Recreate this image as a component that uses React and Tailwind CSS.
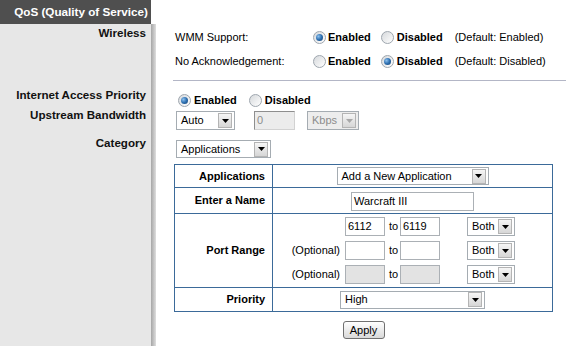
import React from "react";

// small helpers that imitate the old router UI widgets

function Radio({ checked }) {
	return (
		<span className="flex h-[13px] w-[13px] shrink-0 items-center justify-center rounded-full border border-[#9ea6ae] bg-linear-to-br from-[#d6d9dc] to-white">
			{checked && (
				<span className="h-[7px] w-[7px] rounded-full bg-radial-[at_35%_35%] from-[#8cc0ee] via-[#2d6fb0] to-[#173f6e]" />
			)}
		</span>
	);
}

function Arrow({ disabled }) {
	return (
		<span className="flex h-[15px] w-[14px] shrink-0 items-center justify-center border border-[#b4b4b4] bg-linear-to-b from-[#f6f6f6] to-[#d6d6d6]">
			<svg width="7" height="4" viewBox="0 0 7 4">
				<path d="M0 0h7L3.5 4z" fill={disabled ? "#a8a8a8" : "#000"} />
			</svg>
		</span>
	);
}

function Select({ value, className, disabled }) {
	return (
		<div
			className={
				"flex shrink-0 items-center justify-between border border-[#a5acb2] pl-[4px] pr-[2px] " +
				(disabled ? "bg-[#ededed] text-[#8c8c8c] " : "bg-white ") +
				className
			}
		>
			<span className="leading-none">{value}</span>
			<Arrow disabled={disabled} />
		</div>
	);
}

function TextBox({ value, className }) {
	return (
		<div
			className={
				"flex h-[19px] shrink-0 items-center border border-[#abb0b5] pl-[2px] leading-none " +
				className
			}
		>
			{value}
		</div>
	);
}

function Row({ label, labelClass, className, children }) {
	return (
		<div className="flex">
			<div
				className={
					"w-[151px] shrink-0 bg-[#e7e7e7] pr-[5px] text-right text-[11.6px] font-bold leading-[14px] text-[#111] " +
					labelClass
				}
			>
				{label}
			</div>
			<div className="w-[5px] shrink-0 bg-linear-to-r from-[#a6a6a6] to-[#dedede]" />
			<div className={"min-w-0 flex-1 " + className}>{children}</div>
		</div>
	);
}

function PortRow({ label, from, to, disabled }) {
	const box = disabled ? "w-[40px] bg-[#e3e3e3]" : "w-[40px] bg-white";
	return (
		<div className="flex h-[19px] items-center">
			<span className="w-[72px] shrink-0 pr-[5px] text-right">{label}</span>
			<TextBox value={from} className={box} />
			<span className="w-[15px] shrink-0 pl-[4px]">to</span>
			<TextBox value={to} className={box} />
			<span className="w-[27px] shrink-0" />
			<Select value="Both" className="h-[19px] w-[48px]" />
		</div>
	);
}

export default function App() {
	return (
		<div className="flex h-[346px] w-[566px] flex-col overflow-hidden bg-white font-['Liberation_Sans',Arial,sans-serif] text-[11px] text-black">
			{/* title bar */}
			<div className="flex h-[24px] shrink-0">
				<div className="flex w-[151px] shrink-0 items-center justify-end bg-[#4f4f4f] pr-[3px] text-[11.7px] font-bold text-white">
					QoS (Quality of Service)
				</div>
			</div>

			<Row label="Wireless" labelClass="pt-[2px]" className="pt-[1px] pb-[1px]">
				<div className="flex h-[24px] items-center pl-[19px]">
					<span className="w-[138px] shrink-0">WMM Support:</span>
					<Radio checked />
					<span className="ml-[2px] font-bold">Enabled</span>
					<span className="ml-[10px]">
						<Radio />
					</span>
					<span className="ml-[3px] font-bold">Disabled</span>
					<span className="ml-[12px]">(Default: Enabled)</span>
				</div>
				<div className="flex h-[24px] items-center pl-[19px]">
					<span className="w-[138px] shrink-0">No Acknowledgement:</span>
					<Radio />
					<span className="ml-[2px] font-bold">Enabled</span>
					<span className="ml-[10px]">
						<Radio checked />
					</span>
					<span className="ml-[3px] font-bold">Disabled</span>
					<span className="ml-[12px]">(Default: Disabled)</span>
				</div>
				<div className="ml-[17px] mt-[7px] border-t border-[#b3b6c6]" />
			</Row>

			<Row label="Internet Access Priority" labelClass="pt-[6px]" className="pb-[1px]">
				<div className="mt-[11px] flex h-[14px] items-center pl-[22px]">
					<Radio checked />
					<span className="ml-[3px] font-bold">Enabled</span>
					<span className="ml-[12px]">
						<Radio />
					</span>
					<span className="ml-[3px] font-bold">Disabled</span>
				</div>
			</Row>

			<Row label="Upstream Bandwidth" labelClass="pt-0" className="pt-[3px] pb-[4px]">
				<div className="flex items-center pl-[20px]">
					<Select value="Auto" className="h-[19px] w-[59px]" />
					<div className="ml-[19px] flex h-[19px] w-[41px] items-center border border-t-[#8e8e8e] border-l-[#8e8e8e] border-b-[#d2d2d2] border-r-[#d2d2d2] bg-[#ececec] pl-[2px] text-[#8c8c8c]">
						0
					</div>
					<Select value="Kbps" disabled className="ml-[12px] h-[19px] w-[52px]" />
				</div>
			</Row>

			<div className="flex flex-1">
				<div className="w-[151px] shrink-0 bg-[#e7e7e7] pr-[5px] pt-[2px] text-right text-[11.6px] font-bold leading-[14px] text-[#111]">
					Category
				</div>
				<div className="w-[5px] shrink-0 bg-linear-to-r from-[#a6a6a6] to-[#dedede]" />
				<div className="min-w-0 flex-1 pt-[6px]">
					<div className="pl-[20px]">
						<Select value="Applications" className="h-[18px] w-[95px]" />
					</div>

					<div className="ml-[18px] mt-[6px] w-[379px] border border-[#3b6a99]">
						<div className="flex h-[22px]">
							<div className="flex w-[98px] shrink-0 items-center justify-end border-r border-[#3b6a99] pr-[7px] font-bold">
								Applications
							</div>
							<div className="flex flex-1 items-center justify-center">
								<Select value="Add a New Application" className="h-[18px] w-[152px]" />
							</div>
						</div>
						<div className="flex h-[26px] border-t border-[#3b6a99]">
							<div className="flex w-[98px] shrink-0 items-center justify-end border-r border-[#3b6a99] pr-[7px] font-bold">
								Enter a Name
							</div>
							<div className="flex flex-1 items-center justify-center pt-[2px]">
								<TextBox value="Warcraft III" className="w-[123px] bg-white" />
							</div>
						</div>
						<div className="flex h-[74px] border-t border-[#3b6a99]">
							<div className="flex w-[98px] shrink-0 items-center justify-end border-r border-[#3b6a99] pr-[7px] font-bold">
								Port Range
							</div>
							<div className="flex flex-1 flex-col gap-[5px] pt-[3px]">
								<PortRow label="" from="6112" to="6119" />
								<PortRow label="(Optional)" from="" to="" />
								<PortRow label="(Optional)" from="" to="" disabled />
							</div>
						</div>
						<div className="flex h-[24px] border-t border-[#3b6a99]">
							<div className="flex w-[98px] shrink-0 items-center justify-end border-r border-[#3b6a99] pr-[7px] font-bold">
								Priority
							</div>
							<div className="flex flex-1 items-center justify-center">
								<Select value="High" className="h-[18px] w-[145px]" />
							</div>
						</div>
					</div>

					<div className="ml-[18px] mt-[9px] flex w-[379px] justify-center">
						<button className="h-[18px] w-[42px] rounded-[3px] border border-[#707070] bg-linear-to-b from-white to-[#d9d9d9] text-[11px] leading-none">
							Apply
						</button>
					</div>
				</div>
			</div>
		</div>
	);
}
